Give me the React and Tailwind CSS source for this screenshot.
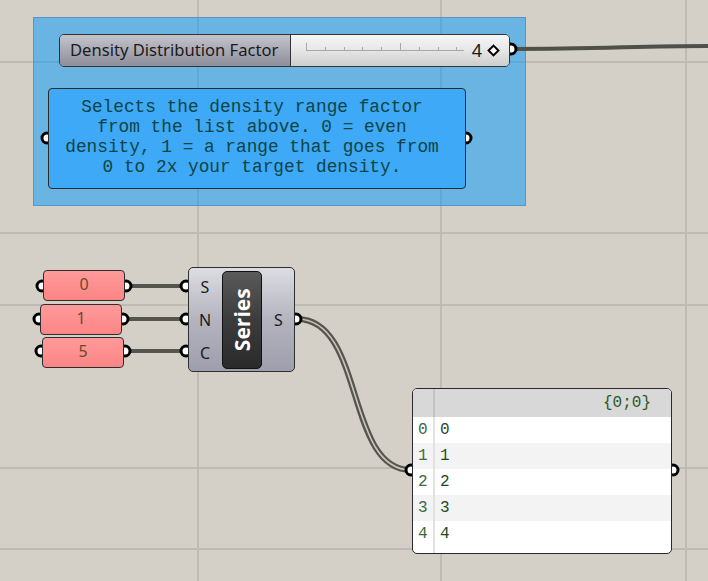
import React from 'react';

const gridV = [198, 441, 686];
const gridH = [62, 233, 305, 468, 549];

const grips = [
  [511, 49], [47, 138], [466, 138],
  [42, 286], [126, 286], [39, 319], [123, 319], [41, 351], [125, 351],
  [186, 286], [186, 319], [186, 351], [296, 319],
  [411, 470], [673, 470],
];

const rows = ['0', '1', '2', '3', '4'];

const PinkSlider = ({ value, className }) => (
  <div className={`absolute h-[31px] w-[82px] rounded-[4px] border-[1.5px] border-[#2e2e2e] bg-gradient-to-b from-[#ff9a9a] to-[#fb8585] flex items-center justify-center pb-[3px] text-[16px] text-[#6a4a28] ${className}`} style={{ fontFamily: '"Noto Sans", sans-serif' }}>
    {value}
  </div>
);

const Wires = () => (
  <svg className="absolute inset-0" width="708" height="581">
    <path d="M511 49 C 600 49, 640 46, 710 46" stroke="#4f4f4b" strokeWidth="4" fill="none" />
    <line x1="126" y1="286" x2="186" y2="286" stroke="#55544f" strokeWidth="4" />
    <line x1="123" y1="319" x2="186" y2="319" stroke="#55544f" strokeWidth="4" />
    <line x1="125" y1="351" x2="186" y2="351" stroke="#55544f" strokeWidth="4" />
    <path d="M297 319 C 365 319, 345 470, 411 470" stroke="#55544f" strokeWidth="6" fill="none" />
    <path d="M297 319 C 365 319, 345 470, 411 470" stroke="#c9c5bd" strokeWidth="1.6" fill="none" />
    {grips.map(([x, y], i) => (
      <circle key={i} cx={x} cy={y} r="5" fill="#ffffff" stroke="#000000" strokeWidth="3" />
    ))}
  </svg>
);

export default function App() {
  return (
    <div className="relative w-[708px] h-[581px] overflow-hidden bg-[#d4d0c8]" style={{ fontFamily: '"Noto Sans", sans-serif' }}>
      {gridV.map((x) => (
        <div key={`v${x}`} className="absolute top-0 h-full w-[2px] bg-[#bfbbb3]" style={{ left: x - 1 }} />
      ))}
      {gridH.map((y) => (
        <div key={`h${y}`} className="absolute left-0 w-full h-[2px] bg-[#bfbbb3]" style={{ top: y - 1 }} />
      ))}

      {/* group */}
      <div className="absolute left-[33px] top-[17px] w-[493px] h-[189px] bg-[rgba(0,152,255,0.5)] border border-[#5896c8]" />

      <Wires />

      {/* density slider */}
      <div className="absolute left-[59px] top-[34px] w-[451px] h-[33px] flex rounded-[5px] border-[1.5px] border-[#333] overflow-hidden">
        <div className="w-[231px] h-full bg-gradient-to-b from-[#c4c4cc] via-[#a9a9b4] to-[#8e8e9c] border-r-[1.5px] border-[#333] flex items-center pl-[10px] pb-[1px] text-[16.6px] text-[#1a1a1a]">
          Density Distribution Factor
        </div>
        <div className="relative flex-1 h-full bg-gradient-to-b from-[#f6f6f6] via-[#e6e6e6] to-[#cdcdcd] flex items-center justify-end pr-[11px] gap-[7px]">
          <div className="absolute left-[15px] top-[15px] w-[158px] h-px bg-[#a8a8a8]" />
          {Array.from({ length: 9 }).map((_, i) => (
            <div
              key={i}
              className={`absolute w-px bg-[#a8a8a8] ${i % 5 === 0 ? 'top-[8px] h-[8px]' : 'top-[12px] h-[4px]'}`}
              style={{ left: 15 + i * 18.8 }}
            />
          ))}
          <span className="text-[18px] leading-none text-[#1a1a1a] pb-[1px]">4</span>
          <span className="w-[9px] h-[9px] rotate-45 border-[2px] border-black bg-white" />
        </div>
      </div>

      {/* text panel */}
      <div
        className="absolute left-[48px] top-[88px] w-[418px] h-[101px] rounded-[4px] border-[1.5px] border-[#2a2a2a] bg-[#3ea9f6] flex justify-center pt-[8px] pr-[10px] text-center text-[17.8px] leading-[20px] text-[#0f4446]"
        style={{ fontFamily: '"Liberation Mono", monospace' }}
      >
        <p>
          Selects the density range factor<br />
          from the list above. 0 = even<br />
          density, 1 = a range that goes from<br />
          0 to 2x your target density.
        </p>
      </div>

      {/* number sliders */}
      <PinkSlider value="0" className="left-[43px] top-[270px]" />
      <PinkSlider value="1" className="left-[40px] top-[304px]" />
      <PinkSlider value="5" className="left-[42px] top-[337px]" />

      {/* series component */}
      <div className="absolute left-[188px] top-[267px] w-[107px] h-[105px] rounded-[5px] border-[1.5px] border-[#2e2e2e] bg-gradient-to-b from-[#dcdce2] via-[#b4b4c0] to-[#9e9eac] flex items-center px-[2px] gap-[3px]">
        <div className="w-[28px] flex flex-col items-center gap-[9px] text-[16px] leading-[24px] text-[#1a1a1a]">
          <span>S</span>
          <span>N</span>
          <span>C</span>
        </div>
        <div className="w-[40px] h-[98px] rounded-[5px] border-[1.5px] border-[#111] bg-gradient-to-b from-[#5a5a5a] via-[#3c3c3c] to-[#2a2a2a] flex items-center justify-center">
          <span className="-rotate-90 text-[21px] font-bold text-white whitespace-nowrap" style={{ fontFamily: '"Open Sans", sans-serif' }}>Series</span>
        </div>
        <div className="flex-1 flex justify-center text-[16px] text-[#1a1a1a]">S</div>
      </div>

      {/* data panel */}
      <div
        className="absolute left-[412px] top-[388px] w-[260px] h-[166px] rounded-[5px] border-[1.5px] border-[#2a2a2a] bg-white overflow-hidden text-[16px] text-[#1f4a1f]"
        style={{ fontFamily: '"Liberation Mono", monospace' }}
      >
        <div className="relative h-[28px] bg-[#d8d8d8] flex items-center justify-end pr-[20px] text-[#2a5a2a]">
          {'{0;0}'}
          <div className="absolute left-[20px] top-0 h-full w-[2px] bg-[#c4c4c4]" />
        </div>
        {rows.map((r, i) => (
          <div key={r} className={`flex h-[26px] items-center ${i % 2 === 1 ? 'bg-[#f3f3f3]' : 'bg-white'}`}>
            <span className="w-[20px] pl-[5px] text-[#3c6a3c]">{r}</span>
            <span className="w-[2px] h-full bg-[#e2e2e2]" />
            <span className="pl-[5px]">{r}</span>
          </div>
        ))}
        <div className="flex h-[8px]">
          <span className="w-[20px]" />
          <span className="w-[2px] h-full bg-[#e2e2e2]" />
        </div>
      </div>
    </div>
  );
}
